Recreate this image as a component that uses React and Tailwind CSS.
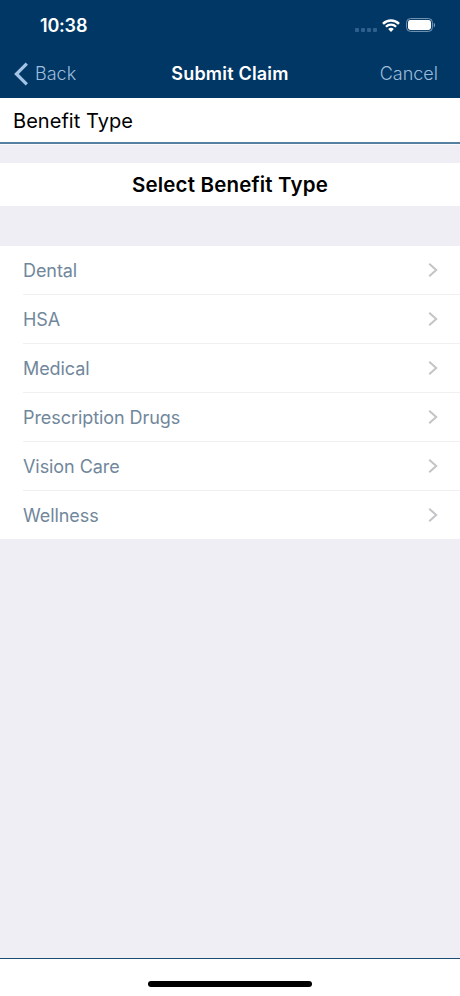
const benefitTypes = ['Dental', 'HSA', 'Medical', 'Prescription Drugs', 'Vision Care', 'Wellness'];

const StatusBar = () => (
    <div className="h-[50px] pl-10 pr-6 flex items-center justify-between text-white">
        <span className="pt-[2px] text-[18px] leading-[22px] font-semibold tracking-[-0.2px]">10:38</span>
        <div className="flex items-center">
            <div className="flex gap-[2px] mr-[5px] mt-[10px]">
                <span className="w-[4px] h-[4px] rounded-[1px] bg-[#2f5f8d]" />
                <span className="w-[4px] h-[4px] rounded-[1px] bg-[#2f5f8d]" />
                <span className="w-[4px] h-[4px] rounded-[1px] bg-[#2f5f8d]" />
                <span className="w-[4px] h-[4px] rounded-[1px] bg-[#2f5f8d]" />
            </div>
            <svg className="w-[18px] h-[13px] mr-[6px]" viewBox="0 0 18 13" fill="none">
                <path d="M1 4.8A11.4 11.4 0 0 1 17 4.8" stroke="white" strokeWidth="2.5" />
                <path d="M3.9 7.8A7.3 7.3 0 0 1 14.1 7.8" stroke="white" strokeWidth="2.3" />
                <path d="M9 13L6.2 10.1A4 4 0 0 1 11.8 10.1Z" fill="white" />
            </svg>
            <svg className="w-[30px] h-[14px]" viewBox="0 0 30 14" fill="none">
                <rect x="0.6" y="0.6" width="25.8" height="12.8" rx="3.8" stroke="#7d9bb8" strokeWidth="1" />
                <rect x="2" y="2" width="23" height="10" rx="2.4" fill="white" />
                <path d="M27.8 4.8C29.6 5.6 29.6 8.6 27.8 9.4Z" fill="#7d9bb8" />
            </svg>
        </div>
    </div>
);

const NavBar = () => (
    <div className="h-12 pl-[14px] pr-[22px] flex items-center text-[18px] leading-6">
        <button className="flex-1 flex items-center text-[#9dbcdc] font-light">
            <svg className="w-[15px] h-6 mr-[6px]" viewBox="0 0 15 24" fill="none">
                <path d="M12.8 1.6L2.4 12L12.8 22.4" stroke="#a3c4e6" strokeWidth="3.2" />
            </svg>
            Back
        </button>
        <h1 className="pl-2 text-center text-white font-semibold whitespace-nowrap tracking-[0.2px]">Submit Claim</h1>
        <button className="flex-1 text-right text-[#9dbcdc] font-light">Cancel</button>
    </div>
);

const BenefitRow = ({ label, last }) => (
    <li className={`flex pl-[23px] ${last ? 'h-12' : 'h-[49px]'}`}>
        <button className={`flex-1 flex items-center justify-between pr-[22px] ${last ? '' : 'border-b border-[#f0f0f2]'}`}>
            <span className="pt-px text-[18px] leading-6 tracking-[-0.07px] text-[#71879b]">{label}</span>
            <svg className="w-[10px] h-[14px]" viewBox="0 0 10 14" fill="none">
                <path d="M1.2 0.8L8.2 7L1.2 13.2" stroke="#c4c4c8" strokeWidth="2" />
            </svg>
        </button>
    </li>
);

export default function App() {
    return (
        <div className="w-[460px] h-[996px] flex flex-col overflow-hidden bg-[#efeef4] font-['Inter',sans-serif]">
            <header className="h-[98px] bg-[#003765]">
                <StatusBar />
                <NavBar />
            </header>

            <div className="h-[46px] bg-white border-b-2 border-[#5580a0] pl-[13px] flex items-center">
                <span className="pt-[2px] text-[20px] leading-6 tracking-[0.05px] text-black">Benefit Type</span>
            </div>
            <div className="h-px bg-[#fafafc]" />

            <h2 className="mt-[18px] h-[43px] pt-[2px] bg-white flex items-center justify-center text-[20.5px] font-semibold tracking-[0.18px] text-black">
                Select Benefit Type
            </h2>

            <ul className="mt-10 h-[293px] bg-white flex flex-col">
                {benefitTypes.map((type, index) => (
                    <BenefitRow key={type} label={type} last={index === benefitTypes.length - 1} />
                ))}
            </ul>

            <footer className="mt-auto h-[38px] bg-white border-t border-[#1d4c73] flex justify-center">
                <div className="mt-[22px] w-[164px] h-[6px] rounded-full bg-black" />
            </footer>
        </div>
    );
}
